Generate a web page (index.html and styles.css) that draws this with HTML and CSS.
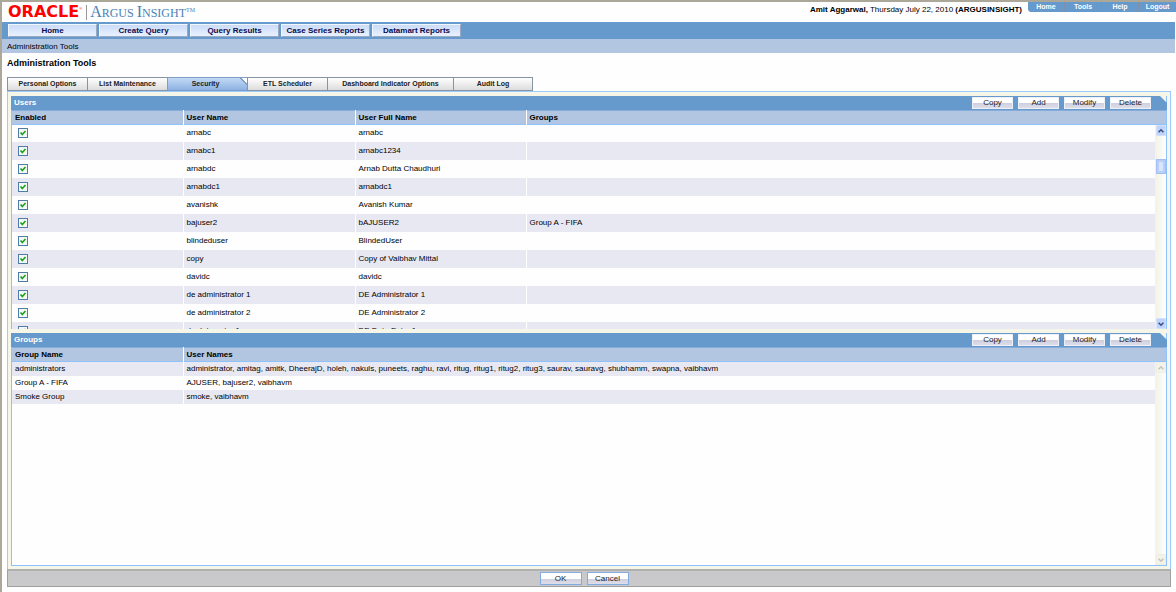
FILE: index.html
```html
<!DOCTYPE html>
<html lang="en">
<head>
    <meta charset="UTF-8">
    <meta name="viewport" content="width=device-width, initial-scale=1.0">
    <title>Argus Insight - Administration Tools</title>
    <link rel="stylesheet" href="styles.css">
</head>
<body>

    <header class="top">
        <div class="logo">
            <span class="oracle">ORACLE</span><span class="reg">&reg;</span>
            <span class="product"><b>A</b>RGUS <b>I</b>NSIGHT<sup>TM</sup></span>
        </div>
        <p class="session"><b>Amit Aggarwal,</b> Thursday July 22, 2010 <b>(ARGUSINSIGHT)</b></p>
        <nav class="quick-links">
            <a href="#">Home</a>
            <a href="#">Tools</a>
            <a href="#">Help</a>
            <a href="#">Logout</a>
        </nav>
    </header>

    <nav class="main-nav">
        <a href="#">Home</a>
        <a href="#">Create Query</a>
        <a href="#">Query Results</a>
        <a href="#">Case Series Reports</a>
        <a href="#">Datamart Reports</a>
    </nav>
    <div class="breadcrumb">Administration Tools</div>

    <main>
        <h1>Administration Tools</h1>

        <div class="tabs">
            <button type="button">Personal Options</button>
            <button type="button">List Maintenance</button>
            <button type="button" class="active">Security</button>
            <button type="button">ETL Scheduler</button>
            <button type="button" class="wide">Dashboard Indicator Options</button>
            <button type="button">Audit Log</button>
        </div>

        <div class="content">
            <!-- Users -->
            <section class="panel users">
                <div class="panel-bar">
                    <h2>Users</h2>
                    <button type="button">Copy</button>
                    <button type="button">Add</button>
                    <button type="button">Modify</button>
                    <button type="button">Delete</button>
                </div>
                <table class="head">
                    <tr><th class="c1">Enabled</th><th class="c2">User Name</th><th class="c3">User Full Name</th><th>Groups</th></tr>
                </table>
                <div class="list">
                    <div class="rows">
                        <table>
                            <tr><td class="c1"><input type="checkbox" aria-label="arnabc" checked></td><td class="c2">arnabc</td><td class="c3">arnabc</td><td></td></tr>
                            <tr><td><input type="checkbox" aria-label="arnabc1" checked></td><td>arnabc1</td><td>arnabc1234</td><td></td></tr>
                            <tr><td><input type="checkbox" aria-label="arnabdc" checked></td><td>arnabdc</td><td>Arnab Dutta Chaudhuri</td><td></td></tr>
                            <tr><td><input type="checkbox" aria-label="arnabdc1" checked></td><td>arnabdc1</td><td>arnabdc1</td><td></td></tr>
                            <tr><td><input type="checkbox" aria-label="avanishk" checked></td><td>avanishk</td><td>Avanish Kumar</td><td></td></tr>
                            <tr><td><input type="checkbox" aria-label="bajuser2" checked></td><td>bajuser2</td><td>bAJUSER2</td><td>Group A - FIFA</td></tr>
                            <tr><td><input type="checkbox" aria-label="blindeduser" checked></td><td>blindeduser</td><td>BlindedUser</td><td></td></tr>
                            <tr><td><input type="checkbox" aria-label="copy" checked></td><td>copy</td><td>Copy of Vaibhav Mittal</td><td></td></tr>
                            <tr><td><input type="checkbox" aria-label="davidc" checked></td><td>davidc</td><td>davidc</td><td></td></tr>
                            <tr><td><input type="checkbox" aria-label="de administrator 1" checked></td><td>de administrator 1</td><td>DE Administrator 1</td><td></td></tr>
                            <tr><td><input type="checkbox" aria-label="de administrator 2" checked></td><td>de administrator 2</td><td>DE Administrator 2</td><td></td></tr>
                            <tr><td><input type="checkbox" aria-label="de data entry 1" checked></td><td>de data entry 1</td><td>DE Data Entry 1</td><td></td></tr>
                        </table>
                    </div>
                    <div class="scrollbar">
                        <button type="button" aria-label="Scroll up"><svg viewBox="0 0 10 10"><path d="M2 6.5 5 3.5 8 6.5"/></svg></button>
                        <div class="track"><div class="thumb"></div></div>
                        <button type="button" aria-label="Scroll down"><svg viewBox="0 0 10 10"><path d="M2 3.5 5 6.5 8 3.5"/></svg></button>
                    </div>
                </div>
            </section>

            <!-- Groups -->
            <section class="panel groups">
                <div class="panel-bar">
                    <h2>Groups</h2>
                    <button type="button">Copy</button>
                    <button type="button">Add</button>
                    <button type="button">Modify</button>
                    <button type="button">Delete</button>
                </div>
                <table class="head">
                    <tr><th class="c1">Group Name</th><th>User Names</th></tr>
                </table>
                <div class="list">
                    <div class="rows">
                        <table>
                            <tr><td class="c1">administrators</td><td>administrator, amitag, amitk, DheerajD, holeh, nakuls, puneets, raghu, ravi, ritug, ritug1, ritug2, ritug3, saurav, sauravg, shubhamm, swapna, vaibhavm</td></tr>
                            <tr><td>Group A - FIFA</td><td>AJUSER, bajuser2, vaibhavm</td></tr>
                            <tr><td>Smoke Group</td><td>smoke, vaibhavm</td></tr>
                        </table>
                    </div>
                    <div class="scrollbar off">
                        <button type="button" aria-label="Scroll up" disabled><svg viewBox="0 0 10 10"><path d="M2 6.5 5 3.5 8 6.5"/></svg></button>
                        <div class="track"></div>
                        <button type="button" aria-label="Scroll down" disabled><svg viewBox="0 0 10 10"><path d="M2 3.5 5 6.5 8 3.5"/></svg></button>
                    </div>
                </div>
            </section>
        </div>

        <div class="actions">
            <button type="button">OK</button>
            <button type="button">Cancel</button>
        </div>
    </main>

</body>
</html>
```
FILE: styles.css
```css
* {
    box-sizing: border-box;
}

body {
    display: flex;
    flex-direction: column;
    min-height: 100vh;
    margin: 0;
    border-top: 2px solid #aca899;
    border-left: 2px solid #aca899;
    background-color: #fefefe;
    font-family: "Liberation Sans", Arial, sans-serif;
    font-size: 8px;
    line-height: 10px;
    color: #000;
}

h1, h2, p {
    margin: 0;
}

button {
    font-family: inherit;
    padding: 0;
    margin: 0;
}

a {
    text-decoration: none;
}

/* Header */
.top {
    display: flex;
    align-items: flex-start;
    height: 20px;
}

.logo {
    display: flex;
    align-items: center;
    flex: 1;
    height: 20px;
    padding-left: 6px;
    white-space: nowrap;
}

.oracle {
    font-family: "DejaVu Sans", sans-serif;
    font-size: 16px;
    font-weight: bold;
    line-height: 20px;
    color: #f00;
}

.reg {
    align-self: flex-start;
    padding-top: 2px;
    font-size: 4px;
    color: #f00;
}

.product {
    margin-left: 4px;
    padding-left: 3px;
    border-left: 1px solid #999;
    font-family: "Liberation Serif", serif;
    font-size: 12px;
    line-height: 14px;
    color: #4a82b8;
}

.product b {
    font-size: 16px;
    font-weight: normal;
}

.product sup {
    font-size: 6px;
    line-height: 6px;
    vertical-align: 5px;
}

.session {
    padding: 3px 6px 0 0;
    white-space: nowrap;
}

.quick-links {
    display: flex;
    background-color: #6699cc;
    clip-path: polygon(0 0, 100% 0, 100% 100%, 2px 100%, 0 8px);
}

.quick-links a {
    width: 37px;
    height: 10px;
    border-right: 1px solid #7f8fa8;
    font-size: 7px;
    font-weight: bold;
    line-height: 9px;
    text-align: center;
    color: white;
}

.quick-links a:last-child {
    border-right: none;
}

/* Navigation */
.main-nav {
    display: flex;
    gap: 2px;
    height: 17px;
    padding: 2px 6px;
    margin-right: 1px;
    background-color: #6699cc;
}

.main-nav a {
    width: 89px;
    height: 13px;
    border: 1px solid #f2f6ff;
    border-bottom-color: #9aa9c2;
    border-right-color: #9aa9c2;
    background: linear-gradient(#cbdcf7, #e9f1ff);
    font-weight: bold;
    line-height: 11px;
    text-align: center;
    white-space: nowrap;
    color: #0a0a50;
}

.breadcrumb {
    height: 14px;
    margin-right: 1px;
    padding: 3px 5px 0;
    background-color: #b2c6e1;
}

main {
    display: flex;
    flex-direction: column;
    flex: 1;
    padding: 4px 5px 5px;
}

h1 {
    font-size: 9px;
    line-height: 12px;
    margin-bottom: 8px;
}

/* Tabs */
.tabs {
    display: flex;
}

.tabs button {
    width: 80px;
    height: 14px;
    border: 1px solid #8a93a3;
    border-right: none;
    background: linear-gradient(#fff, #dcdcdc);
    font-size: 7px;
    font-weight: bold;
    line-height: 12px;
    white-space: nowrap;
    color: #222;
}

.tabs .wide {
    width: 126px;
}

.tabs button:last-child {
    border-right: 1px solid #8a93a3;
}

.tabs .active {
    padding-right: 4px;
    border-color: #7f9cc4;
    background: linear-gradient(225deg, white 4px, #7f9cc4 4px, #7f9cc4 5px, transparent 5px), linear-gradient(#c3d9f5, #8db2e2);
}

/* Panels */
.content {
    display: flex;
    flex-direction: column;
    flex: 1;
    gap: 4px;
    border: 1px solid #9cccff;
    border-bottom: none;
    padding: 4px 3px 3px;
    background-color: #f5f5e8;
}

.panel {
    display: flex;
    flex-direction: column;
    border-left: 1px solid #8fc1fa;
    border-right: 1px solid #8fc1fa;
}

.groups {
    flex: 1;
    border-bottom: 1px solid #8fc1fa;
}

.panel-bar {
    display: flex;
    align-items: center;
    gap: 5px;
    height: 14px;
    margin: 0 -1px;
    padding: 0 16px 0 3px;
    background-color: #6699cc;
    clip-path: polygon(0 0, calc(100% - 7px) 0, 100% 7px, 100% 100%, 0 100%);
}

h2 {
    flex: 1;
    font-size: 8px;
    line-height: 14px;
    color: white;
}

.panel-bar button, .actions button {
    width: 41px;
    height: 12px;
    border: 1px solid #eef0f8;
    background: linear-gradient(#fff 50%, #cfcfe0 55%, #dedeea);
    font-size: 8px;
    line-height: 10px;
    color: #222;
}

table {
    width: 100%;
    border-collapse: collapse;
    table-layout: fixed;
}

th, td {
    padding: 0 3px;
    border-left: 1px solid #fefefe;
    text-align: left;
    white-space: nowrap;
}

th:first-child, td:first-child {
    border-left: none;
}

.c1 {
    width: 171px;
}

.c2 {
    width: 172px;
}

.c3 {
    width: 171px;
}

.head {
    background-color: #b2c6e1;
    border-top: 1px solid #86add9;
    border-bottom: 1px solid #8fc1fa;
}

.head th {
    height: 14px;
}

.list {
    display: flex;
    flex: 1;
    background-color: #fefefe;
}

.users .list {
    height: 204px;
    flex: none;
}

.rows {
    flex: 1;
    overflow: hidden;
}

/* list is scrolled a little past the row edge */
.users .rows table {
    margin-top: -1px;
}

.users td {
    height: 18px;
}

.groups td {
    height: 14px;
}

.users tr:nth-child(even) td, .groups .rows tr:nth-child(odd) td {
    background-color: #e8e8f3;
}

input[type="checkbox"] {
    display: block;
    appearance: none;
    width: 10px;
    height: 10px;
    margin: 0 0 0 3px;
    border: 1px solid #4d7da8;
    background-color: #f4f8f4;
}

input[type="checkbox"]:checked {
    background-image: url("data:image/svg+xml,%3Csvg xmlns='http://www.w3.org/2000/svg' viewBox='0 0 8 8'%3E%3Cpath d='M1.5 3.5 3.3 5.5 6.5 2' fill='none' stroke='%2321a121' stroke-width='1.7'/%3E%3C/svg%3E");
}

/* Scrollbars */
.scrollbar {
    display: flex;
    flex-direction: column;
    width: 11px;
    border-left: 1px solid #f3f3e8;
    background: linear-gradient(90deg, #f3f3e8, #fefefe);
}

.scrollbar button {
    width: 10px;
    height: 11px;
    border: 1px solid #d3e0fb;
    border-radius: 1px;
    background-color: #c0d4fb;
}

.scrollbar svg {
    display: block;
    width: 8px;
    height: 8px;
    fill: none;
    stroke: #38507f;
    stroke-width: 2;
}

.scrollbar .track {
    flex: 1;
    padding-top: 23px;
}

.thumb {
    width: 10px;
    height: 15px;
    border: 3px solid #b8cffa;
    background-color: #d8e5ff;
    outline: 1px solid #a5bff0;
    outline-offset: -1px;
}

.off button {
    border-color: #eeeee4;
    background-color: #f3f3ea;
}

.off svg {
    stroke: #c4c4ba;
}

/* Bottom buttons */
.actions {
    display: flex;
    justify-content: center;
    align-items: center;
    gap: 5px;
    height: 18px;
    padding-right: 10px;
    border: 1px solid #a0a0a0;
    border-top: 2px solid #b0b0ae;
    background-color: #c9c9cb;
}

.actions button {
    width: 42px;
    height: 13px;
    border-color: #82ace0;
}
```
